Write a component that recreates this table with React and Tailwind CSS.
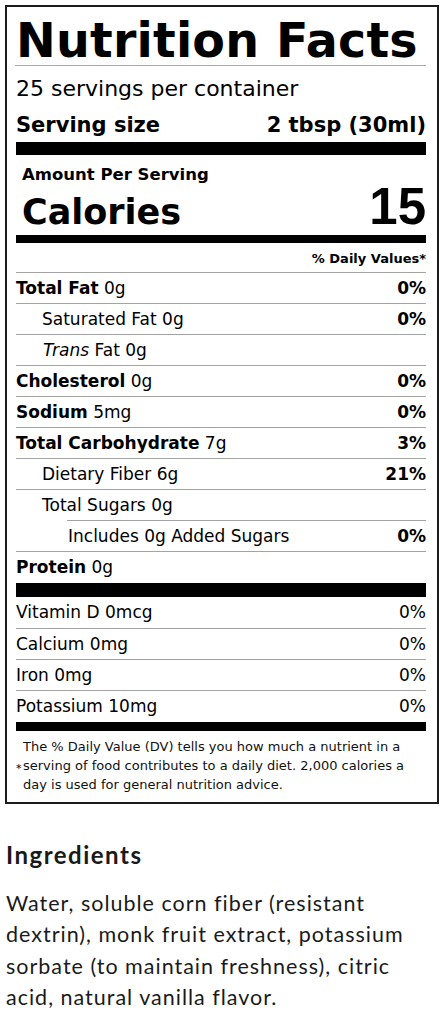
import React from 'react';

const rows = [
  { name: 'Total Fat', amount: '0g', dv: '0%', bold: true },
  { name: 'Saturated Fat', amount: '0g', dv: '0%', indent: 'pl-[26px]' },
  { name: 'Trans', italic: true, amount: 'Fat 0g', indent: 'pl-[27px]' },
  { name: 'Cholesterol', amount: '0g', dv: '0%', bold: true },
  { name: 'Sodium', amount: '5mg', dv: '0%', bold: true },
  { name: 'Total Carbohydrate', amount: '7g', dv: '3%', bold: true },
  { name: 'Dietary Fiber', amount: '6g', dv: '21%', indent: 'pl-[26px]' },
  { name: 'Total Sugars', amount: '0g', indent: 'pl-[26px]' },
  { name: 'Includes 0g Added Sugars', dv: '0%', indent: 'pl-px', rule: 'ml-[51px]' },
];

const vitamins = [
  { name: 'Vitamin D 0mcg', dv: '0%' },
  { name: 'Calcium 0mg', dv: '0%' },
  { name: 'Iron 0mg', dv: '0%' },
  { name: 'Potassium 10mg', dv: '0%' },
];

const NutrientRow = ({ row }) => (
  <div className={`h-[31px] border-t border-[#a3a3a3] ${row.rule || ''}`}>
    <div className={`flex justify-between text-[17px] leading-[30px] ${row.indent || ''}`}>
      <span>
        {row.italic ? (
          <span className="italic">{row.name}</span>
        ) : (
          <span className={row.bold ? 'font-bold' : ''}>{row.name}</span>
        )}
        {row.amount && <span> {row.amount}</span>}
      </span>
      {row.dv && <span className="font-bold">{row.dv}</span>}
    </div>
  </div>
);

const App = () => {
  return (
    <div className="min-h-screen bg-white px-[5px] pt-[5px] text-black">
      <div className="border-2 border-[#1c1c1c] pl-[9px] pr-[11px] pt-[10px] pb-[8px] font-['DejaVu_Sans',sans-serif]">
        <h1 className="text-[47.5px] font-bold leading-[47.5px] tracking-[0.2px] whitespace-nowrap">Nutrition Facts</h1>
        <div className="h-px bg-[#a8a8a8] -ml-px"></div>

        <div className="mt-[10px] text-[22px] leading-[26px]">25 servings per container</div>
        <div className="mt-[10px] flex justify-between text-[21px] font-bold leading-[26px]">
          <span>Serving size</span>
          <span>2 tbsp (30ml)</span>
        </div>
        <div className="mt-[4px] h-[13px] bg-black"></div>

        <div className="mt-[10px] pl-[6px] text-[16.5px] font-bold leading-[20px]">Amount Per Serving</div>
        <div className="flex items-baseline justify-between pl-[6px]">
          <span className="text-[35px] font-bold leading-[30px]">Calories</span>
          <span className="font-['Liberation_Sans',Arial,sans-serif] text-[51px] font-bold leading-[43px]">15</span>
        </div>
        <div className="mt-[7px] h-[8px] bg-black"></div>

        <div className="pt-[3px] text-right text-[13px] font-bold leading-[26px]">% Daily Values*</div>
        {rows.map((row) => (
          <NutrientRow key={row.name} row={row} />
        ))}
        <div className="h-[32px] border-t border-[#a3a3a3] text-[17px] leading-[30px]">
          <span className="font-bold">Protein</span> 0g
        </div>
        <div className="h-[14px] bg-black"></div>

        {vitamins.map((v, i) => (
          <div
            key={v.name}
            className={`flex justify-between text-[17px] ${i === 0 ? 'h-[31px] leading-[31px]' : 'border-t border-[#a3a3a3] h-[31px] leading-[30px]'} ${i === vitamins.length - 1 ? 'h-[32px]' : ''}`}
          >
            <span>{v.name}</span>
            <span>{v.dv}</span>
          </div>
        ))}
        <div className="h-[9px] bg-black"></div>

        <div className="flex items-center pt-[6px]">
          <span className="w-[7px] pt-[6px] text-[11px] leading-[19px]">*</span>
          <p className="flex-1 text-[13px] leading-[19px] text-[#111]">
            The % Daily Value (DV) tells you how much a nutrient in a serving of food contributes to a daily diet. 2,000 calories a day is used for general nutrition advice.
          </p>
        </div>
      </div>

      <div className="px-px font-['Lato',sans-serif] text-[#1a1a1a]">
        <h2 className="mt-[37px] text-[24px] font-bold leading-[28px] tracking-[1.5px]">Ingredients</h2>
        <p className="mt-[19px] text-[21.5px] leading-[31.6px] tracking-[1px]">
          Water, soluble corn fiber (resistant dextrin), monk fruit extract, potassium sorbate (to maintain freshness), citric acid, natural vanilla flavor.
        </p>
      </div>
    </div>
  );
};

export default App;
